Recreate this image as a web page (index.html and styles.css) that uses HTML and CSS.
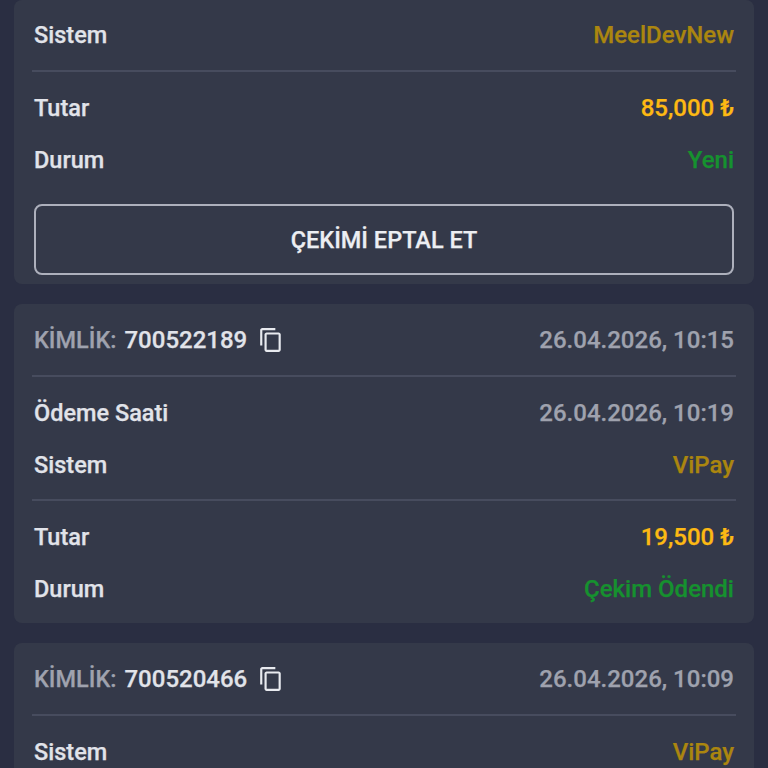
FILE: index.html
```html
<!DOCTYPE html>
<html lang="tr">
<head>
  <meta charset="UTF-8">
  <meta name="viewport" content="width=device-width, initial-scale=1.0">
  <title>Çekim Geçmişi</title>
  <link rel="stylesheet" href="styles.css">
</head>
<body>
  <div class="list">
    <!-- Pending withdrawal, scrolled partly out of view -->
    <div class="card card-top">
      <div class="row">
        <span class="label">Sistem</span>
        <span class="system">MeelDevNew</span>
      </div>
      <div class="divider"></div>
      <div class="row">
        <span class="label">Tutar</span>
        <span class="amount">85,000 ₺</span>
      </div>
      <div class="row">
        <span class="label">Durum</span>
        <span class="state">Yeni</span>
      </div>
      <button class="cancel">ÇEKİMİ EPTAL ET</button>
    </div>

    <!-- Paid withdrawal -->
    <div class="card">
      <div class="row">
        <span class="id"><span class="id-label">KİMLİK:</span> 700522189
          <svg class="copy" viewBox="0 0 24 24" width="26" height="26"><path d="M16 1H4c-1.1 0-2 .9-2 2v14h2V3h12V1zm3 4H8c-1.1 0-2 .9-2 2v14c0 1.1.9 2 2 2h11c1.1 0 2-.9 2-2V7c0-1.1-.9-2-2-2zm0 16H8V7h11v14z"/></svg>
        </span>
        <span class="date">26.04.2026, 10:15</span>
      </div>
      <div class="divider"></div>
      <div class="row">
        <span class="label">Ödeme Saati</span>
        <span class="date">26.04.2026, 10:19</span>
      </div>
      <div class="row">
        <span class="label">Sistem</span>
        <span class="system">ViPay</span>
      </div>
      <div class="divider divider-tight"></div>
      <div class="row">
        <span class="label">Tutar</span>
        <span class="amount">19,500 ₺</span>
      </div>
      <div class="row">
        <span class="label">Durum</span>
        <span class="state">Çekim Ödendi</span>
      </div>
    </div>

    <div class="card">
      <div class="row">
        <span class="id"><span class="id-label">KİMLİK:</span> 700520466
          <svg class="copy" viewBox="0 0 24 24" width="26" height="26"><path d="M16 1H4c-1.1 0-2 .9-2 2v14h2V3h12V1zm3 4H8c-1.1 0-2 .9-2 2v14c0 1.1.9 2 2 2h11c1.1 0 2-.9 2-2V7c0-1.1-.9-2-2-2zm0 16H8V7h11v14z"/></svg>
        </span>
        <span class="date">26.04.2026, 10:09</span>
      </div>
      <div class="divider"></div>
      <div class="row">
        <span class="label">Sistem</span>
        <span class="system">ViPay</span>
      </div>
    </div>
  </div>
</body>
</html>
```

FILE: styles.css
```css
* {
  margin: 0;
  padding: 0;
  box-sizing: border-box;
}

html, body {
  height: 768px;
  overflow: hidden;
}

body {
  font-family: Roboto, "Liberation Sans", sans-serif;
  font-size: 24px;
  font-weight: 500;
  -webkit-text-stroke: 0.25px; /* the text in the shot is a little heavier than 500 */
  background-color: #2a2e42;
  color: #e1e3e9;
}

.list {
  display: flex;
  flex-direction: column;
  gap: 20px;
  padding: 0 14px;
}

.card {
  background-color: #343949;
  border-radius: 8px;
  padding: 10px 20px 8px;
}

.card-top {
  padding-top: 9px;
}

.row {
  display: flex;
  justify-content: space-between;
  align-items: center;
  height: 52px;
}

.divider {
  height: 2px;
  background-color: #474c5e;
  margin: 9px -2px 10px;
}

.divider-tight {
  margin-top: 8px;
}

.label {
  font-size: 23.5px;
}

.id {
  display: flex;
  align-items: center;
  gap: 8px;
}

.id-label {
  color: #9fa2ae;
  font-size: 23.5px;
}

.copy {
  fill: #e8eaef;
  margin-left: 3px;
}

.date {
  color: #9fa2ae;
}

.system {
  color: #ab860f;
}

.amount {
  color: #fdb913;
}

.state {
  color: #16912f;
}

.cancel {
  display: block;
  width: 100%;
  height: 71px;
  margin-top: 18px;
  margin-bottom: 1px;
  background: none;
  border: 2px solid #adb0bc;
  border-radius: 8px;
  color: #eceef2;
  font-family: inherit;
  font-size: 23.5px;
  font-weight: 500;
}
```
